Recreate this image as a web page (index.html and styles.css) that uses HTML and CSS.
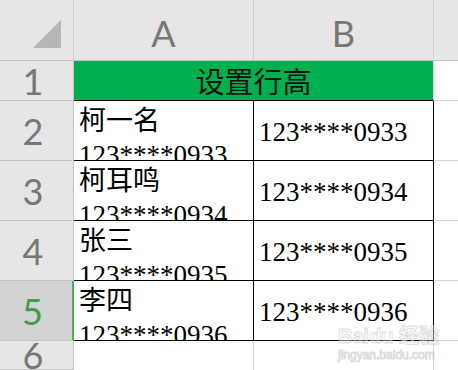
FILE: index.html
```html
<!DOCTYPE html>
<html lang="zh-CN">
<head>
<meta charset="utf-8">
<title>设置行高</title>
<link rel="stylesheet" href="styles.css">
</head>
<body>
<div class="sheet">
  <div class="hd corner">
    <svg class="tri" width="28" height="28" viewBox="0 0 28 28"><polygon points="28,0 28,28 0,28" fill="#b6b6b6"/></svg>
  </div>
  <div class="hd col">A</div>
  <div class="hd col">B</div>
  <div class="hd col last"></div>

  <div class="rh">1</div>
  <div class="title">设置行高</div>
  <div class="blank"></div>

  <div class="rh">2</div>
  <div class="cell a"><div>柯一名</div><div>123****0933</div></div>
  <div class="cell b">123****0933</div>
  <div class="blank"></div>

  <div class="rh">3</div>
  <div class="cell a"><div>柯耳鸣</div><div>123****0934</div></div>
  <div class="cell b">123****0934</div>
  <div class="blank"></div>

  <div class="rh">4</div>
  <div class="cell a"><div>张三</div><div>123****0935</div></div>
  <div class="cell b">123****0935</div>
  <div class="blank"></div>

  <div class="rh sel">5</div>
  <div class="cell a"><div>李四</div><div>123****0936</div></div>
  <div class="cell b">123****0936</div>
  <div class="blank"></div>

  <div class="rh">6</div>
  <div class="empty"></div>
  <div class="empty"></div>
  <div class="blank end"></div>

  <div class="watermark">
    <div class="wm-top">Bai<span class="paw">du</span> 经验</div>
    <div class="wm-url">jingyan.baidu.com</div>
  </div>
</div>
</body>
</html>
```

FILE: styles.css
```css
html, body {
  margin: 0;
  padding: 0;
  background: #ffffff;
  overflow: hidden;
}

.sheet {
  position: relative;
  width: 458px;
  height: 370px;
  display: grid;
  grid-template-columns: 74px 180px 180px 24px;
  grid-template-rows: 61px 40px 60px 60px 60px 60px 29px;
  box-sizing: border-box;
  overflow: hidden;
}

.sheet > div {
  box-sizing: border-box;
}

/* header row */
.hd {
  background: #e6e6e6;
  border-bottom: 1px solid #c4c4c4;
  border-right: 1px solid #d0d0d0;
  font-family: Lato, "Liberation Sans", sans-serif;
  font-size: 36px;
  color: #777777;
  display: flex;
  align-items: center;
  justify-content: center;
  padding-top: 5px;
}

.corner {
  justify-content: flex-end;
  align-items: flex-end;
  padding: 0 12px 12px 0;
  border-right: 1px solid #d0d0d0;
}

.tri {
  display: block;
}

.hd.last {
  border-right: none;
}

/* row headers */
.rh {
  background: #e6e6e6;
  border-right: 1px solid #c4c4c4;
  border-bottom: 1px solid #c4c4c4;
  font-family: Lato, "Liberation Sans", sans-serif;
  font-size: 36px;
  color: #777777;
  display: flex;
  align-items: center;
  justify-content: center;
  padding-right: 7px;
}

.rh.sel {
  background: #d3d3d3;
  color: #3c9f4a;
  border-right: 2px solid #4caf50;
}

/* title */
.title {
  grid-column: span 2;
  background: #00b050;
  border-bottom: 1px solid #000000;
  border-right: 1px solid #dadada;
  font-family: "Noto Sans CJK SC", sans-serif;
  font-size: 29px;
  color: #111111;
  display: flex;
  align-items: center;
  justify-content: center;
  line-height: 1;
}

.blank {
  border-bottom: 1px solid #d6d6d6;
}

.blank.end {
  border-bottom: none;
}

/* data cells */
.cell {
  border-right: 1px solid #000000;
  border-bottom: 1px solid #000000;
  overflow: hidden;
  font-family: "Liberation Serif", "Noto Sans CJK SC", serif;
  font-size: 27px;
  color: #000000;
  padding-left: 5px;
}

.cell.a {
  line-height: 34px;
  padding-top: 3px;
}

.cell.b {
  display: flex;
  align-items: center;
  padding-top: 3px;
}

.empty {
  border-right: 1px solid #d6d6d6;
}

/* faint watermark over the sheet */
.watermark {
  position: absolute;
  left: 338px;
  top: 326px;
  color: rgba(255, 255, 255, 0.4);
  -webkit-text-stroke: 1px rgba(190, 190, 190, 0.55);
  font-family: "Liberation Sans", "Noto Sans CJK SC", sans-serif;
  font-weight: bold;
  pointer-events: none;
}

.wm-top {
  font-size: 20px;
  line-height: 20px;
}

.wm-url {
  font-size: 12px;
  line-height: 14px;
  font-weight: normal;
  margin-top: 2px;
}
```
